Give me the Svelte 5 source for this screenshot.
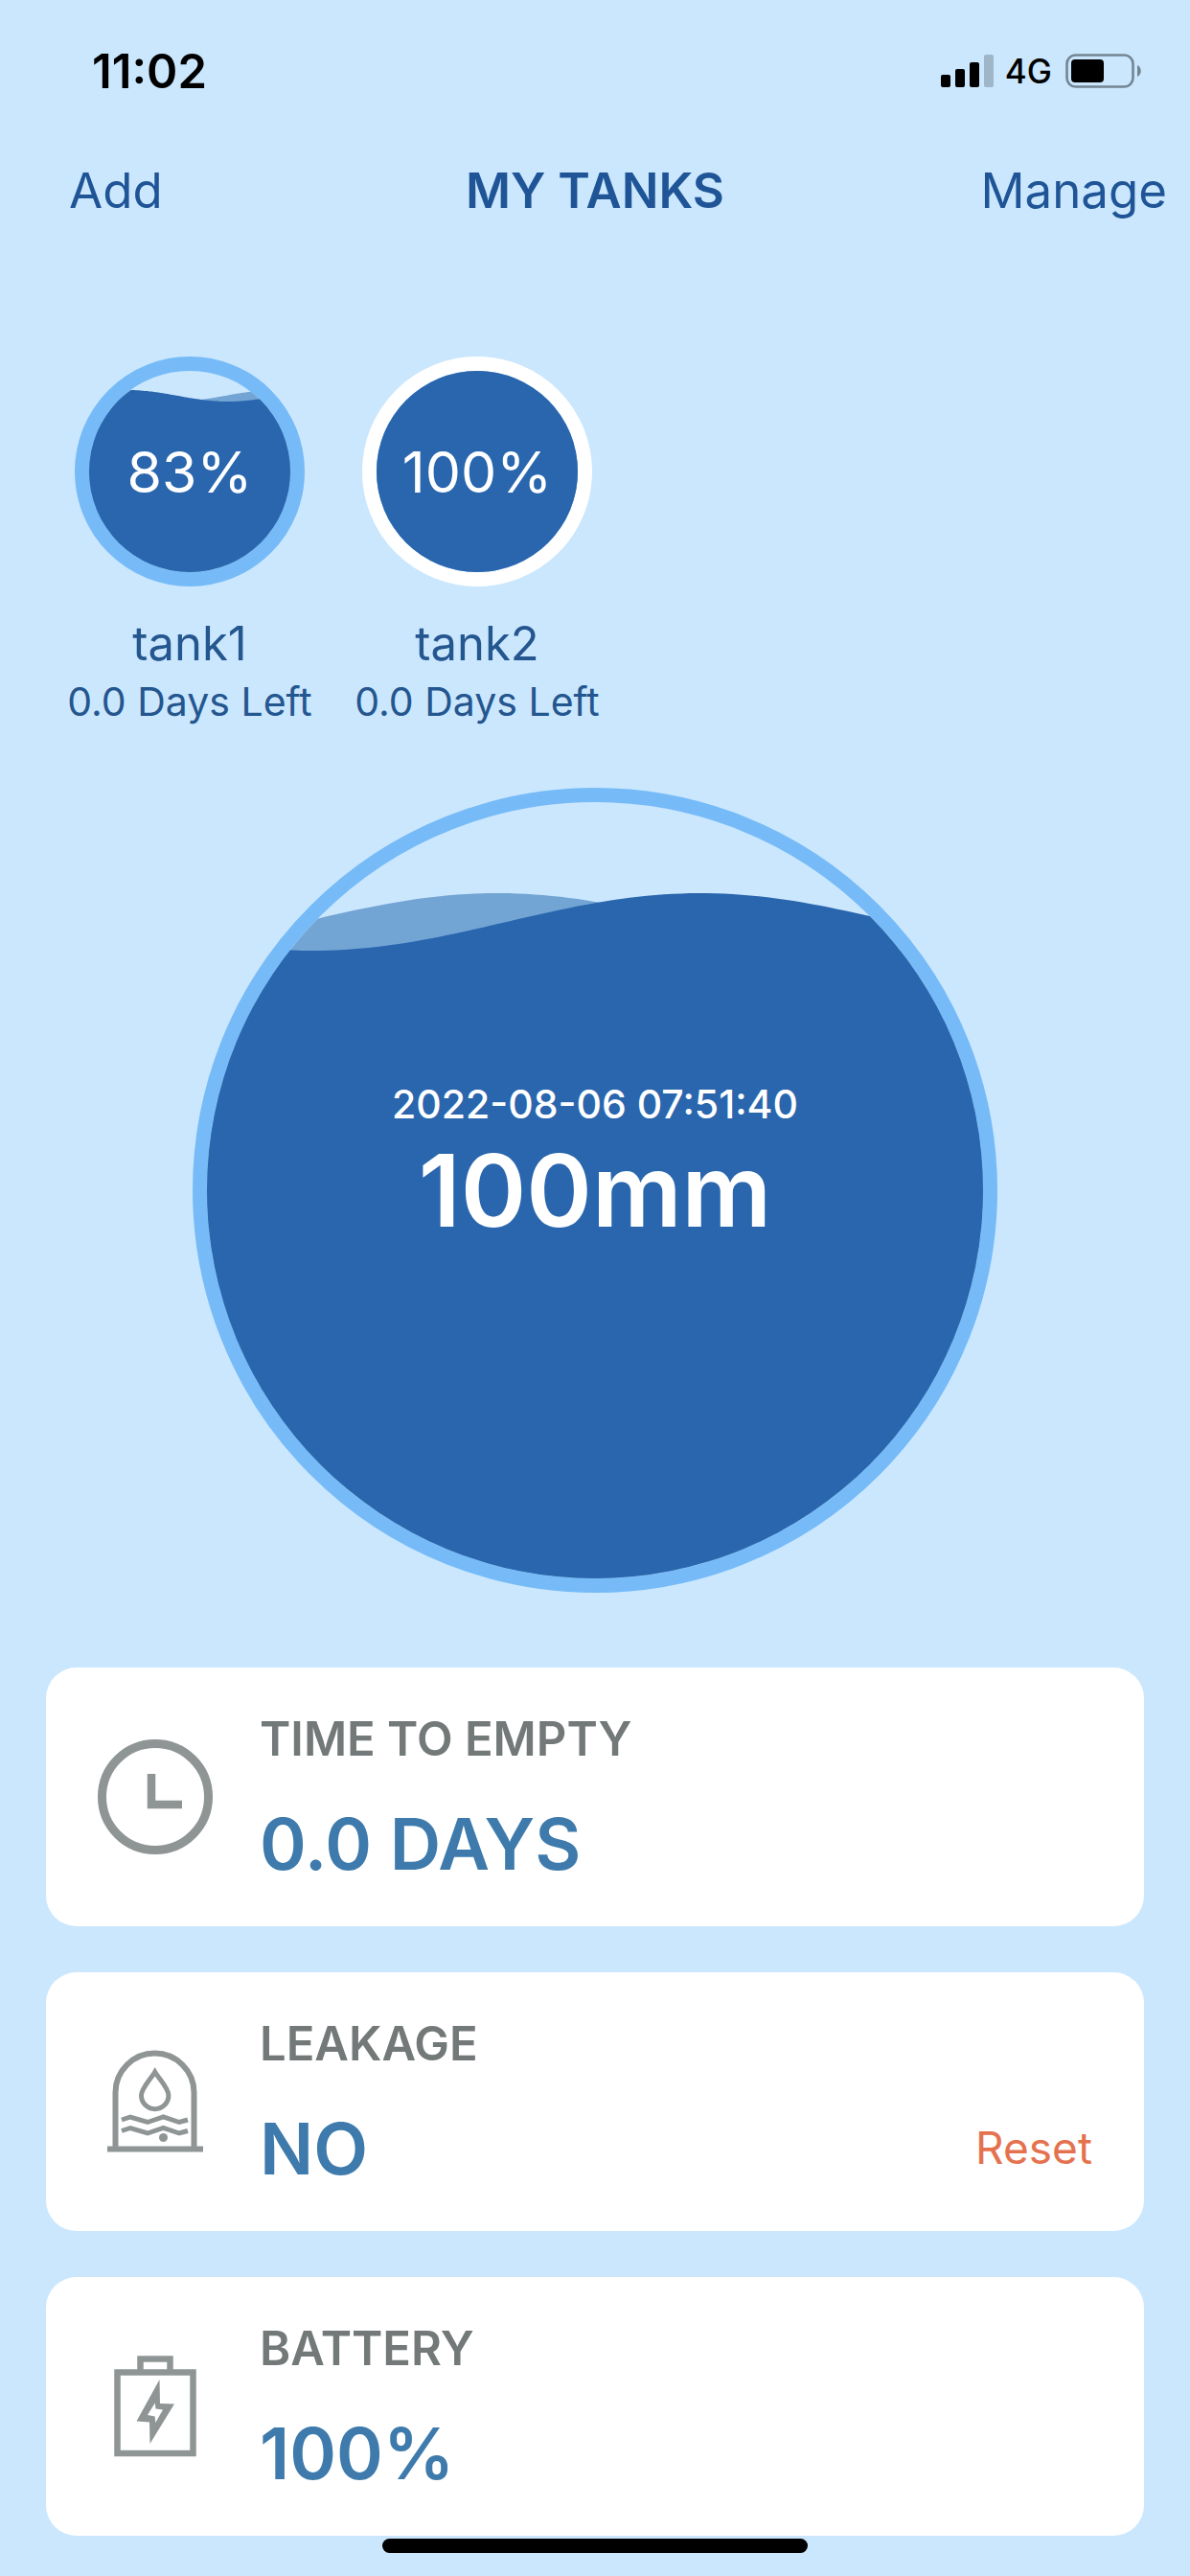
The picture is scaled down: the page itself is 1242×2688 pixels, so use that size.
<script lang="ts">
  type Gauge = { size: number; level: number; amp: number; front: number; back: number };

  const tanks = [
    { name: 'tank1', percent: 83, daysLeft: '0.0', selected: false,
      gauge: { size: 210, level: 26, amp: 6, front: 40, back: 194 } },
    { name: 'tank2', percent: 100, daysLeft: '0.0', selected: true,
      gauge: { size: 210, level: -10, amp: 0, front: 0, back: 0 } },
  ];

  const mainGauge: Gauge = { size: 810, level: 125, amp: 30, front: 515, back: 303 };

  // Closed path under a cosine wave whose crest sits at x = crest.
  function wave(g: Gauge, crest: number): string {
    const step = g.size / 90;
    let d = `M0 ${g.size}`;
    for (let i = 0; i <= 90; i++) {
      const x = i * step;
      const y = g.level - g.amp * Math.cos((2 * Math.PI * (x - crest)) / g.size);
      d += `L${x.toFixed(1)} ${y.toFixed(1)}`;
    }
    return d + `L${g.size} ${g.size}Z`;
  }
</script>

{#snippet water(g: Gauge)}
  <svg class="water" viewBox="0 0 {g.size} {g.size}" aria-hidden="true">
    <path class="wave-back" d={wave(g, g.back)} />
    <path class="wave-front" d={wave(g, g.front)} />
  </svg>
{/snippet}

<div class="app">
  <div class="status">
    <time class="clock">11:02</time>
    <div class="indicators">
      <svg class="signal" viewBox="0 0 55 34" aria-hidden="true">
        <rect x="0" y="21" width="10" height="13" rx="2" />
        <rect x="15" y="15" width="10" height="19" rx="2" />
        <rect x="30" y="8" width="10" height="26" rx="2" />
        <rect x="45" y="0" width="10" height="34" rx="2" fill="#9fb5c8" />
      </svg>
      <span class="network">4G</span>
      <svg class="power" viewBox="0 0 80 36" aria-hidden="true">
        <rect x="1.5" y="1.5" width="69" height="33" rx="9" fill="none" stroke="#738592" stroke-width="2.6" />
        <rect x="6" y="6" width="34" height="24" rx="4" />
        <path d="M75 12c5 2 5 10 0 12z" fill="#738592" />
      </svg>
    </div>
  </div>

  <header class="nav">
    <button class="nav-action start">Add</button>
    <h1>MY TANKS</h1>
    <button class="nav-action end">Manage</button>
  </header>

  <main>
    <div class="tanks">
      {#each tanks as tank}
        <button class="tank">
          <span class="ring" class:selected={tank.selected}>
            {@render water(tank.gauge)}
            <span class="percent">{tank.percent}%</span>
          </span>
          <span class="name">{tank.name}</span>
          <span class="days">{tank.daysLeft} Days Left</span>
        </button>
      {/each}
    </div>

    <section class="ring main-ring" aria-label="Water level">
      {@render water(mainGauge)}
      <div class="reading">
        <time>2022-08-06 07:51:40</time>
        <strong>100mm</strong>
      </div>
    </section>

    <div class="cards">
      <section class="card">
        <svg class="icon" viewBox="0 0 120 120" aria-hidden="true">
          <circle cx="60" cy="60" r="55.5" stroke-width="9" />
          <path d="M56 36V68H88" stroke-width="8.5" />
        </svg>
        <div class="info">
          <h2>TIME TO EMPTY</h2>
          <p>0.0 DAYS</p>
        </div>
      </section>

      <section class="card">
        <svg class="icon" viewBox="0 0 120 120" aria-hidden="true">
          <path d="M10 109.5H110" stroke-width="6" />
          <path d="M18.5 109V50.5a41 41 0 0 1 82 0V109" stroke-width="6" />
          <path d="M59.700 29C55 37 45.500 46 45.500 53.500a14.200 14.200 0 0 0 28.400 0C73.900 46 64.500 37 59.700 29Z" stroke-width="5" />
          <path d="M25 79L34 76L52 81.500L68.500 76L85 81.500L94 79M25 90.500L34 87.500L52 93L68.500 87.500L85 93L94 90.500" stroke-width="5" />
          <circle class="solid" cx="68.500" cy="97.500" r="4.500" />
        </svg>
        <div class="info">
          <h2>LEAKAGE</h2>
          <p>NO</p>
        </div>
        <button class="reset">Reset</button>
      </section>

      <section class="card">
        <svg class="icon" viewBox="0 0 120 120" aria-hidden="true">
          <rect x="20.500" y="24.500" width="79" height="84.500" stroke-width="6.5" />
          <path d="M44.500 24V10.500H75.500V24" stroke-width="6.5" />
          <path class="solid" fill-rule="evenodd" d="M64.500 32L65 57L80 57.500L54.500 99L54 76.500L40.500 75.500ZM59.700 56.500L52 69L59.700 70.500L60.300 77L68 63.500L60.500 62.500Z" />
        </svg>
        <div class="info">
          <h2>BATTERY</h2>
          <p>100%</p>
        </div>
      </section>
    </div>
  </main>

  <div class="home-bar"></div>
</div>

<style>
  :global(body) {
    background: #cbe7fd;
  }

  .app {
    position: relative;
    box-sizing: border-box;
    min-height: 100vh;
    padding-bottom: 42px;
    background: #cbe7fd;
    color: #24568f;
    font-family: Inter, "Liberation Sans", sans-serif;
  }

  button {
    border: 0;
    padding: 0;
    background: none;
    color: inherit;
    font: inherit;
    cursor: pointer;
  }

  h1, h2, p {
    margin: 0;
  }

  .status {
    display: flex;
    align-items: center;
    justify-content: space-between;
    box-sizing: border-box;
    height: 132px;
    padding: 16px 50px 0 96px;
    color: #000;
  }

  .clock {
    font-size: 49px;
    font-weight: 600;
  }

  .indicators {
    display: flex;
    align-items: center;
  }

  .signal {
    width: 55px;
    height: 34px;
    margin-right: 12px;
  }

  .network {
    margin-right: 14px;
    font-size: 35px;
    font-weight: 500;
  }

  .power {
    width: 80px;
    height: 36px;
  }

  .nav {
    display: grid;
    grid-template-columns: 1fr auto 1fr;
    align-items: center;
    height: 132px;
    padding: 0 24px;
    font-size: 51px;
    color: #1f5597;
  }

  .nav-action.start {
    justify-self: start;
    margin-left: 48px;
  }

  .nav-action.end {
    justify-self: end;
  }

  h1 {
    font-size: 51px;
    font-weight: 600;
  }

  .tanks {
    display: flex;
    gap: 48px;
    padding: 108px 72px 0;
  }

  .tank {
    display: flex;
    flex-direction: column;
    align-items: center;
    width: 252px;
    white-space: nowrap;
  }

  .ring {
    position: relative;
    display: grid;
    place-items: center;
    box-sizing: border-box;
    width: 240px;
    aspect-ratio: 1;
    overflow: hidden;
    border: 15px solid #76bbf8;
    border-radius: 50%;
    color: #fff;
  }

  .ring.selected {
    border-color: #fff;
  }

  .water {
    grid-area: 1 / 1;
    width: 100%;
    height: 100%;
  }

  .wave-back {
    fill: #73a5d4;
  }

  .wave-front {
    fill: #2966ae;
  }

  .percent {
    grid-area: 1 / 1;
    font-size: 59px;
  }

  .name {
    margin-top: 28px;
    font-size: 49px;
    line-height: 64px;
  }

  .days {
    font-size: 41px;
    line-height: 56px;
  }

  .main-ring {
    width: 840px;
    max-width: 100%;
    margin: 62px auto 0;
  }

  .reading {
    grid-area: 1 / 1;
    display: flex;
    flex-direction: column;
    align-items: center;
    padding-bottom: 50px;
  }

  .reading time {
    font-size: 41px;
    font-weight: 500;
    line-height: 50px;
  }

  .reading strong {
    font-size: 104px;
    font-weight: 600;
    line-height: 130px;
  }

  .cards {
    display: grid;
    gap: 48px;
    padding: 78px 48px 0;
  }

  .card {
    display: flex;
    align-items: center;
    gap: 49px;
    min-height: 270px;
    box-sizing: border-box;
    padding: 0 54px;
    border-radius: 32px;
    background: #fff;
  }

  .icon {
    flex: none;
    width: 120px;
    height: 120px;
    fill: none;
    stroke: #8f9595;
  }

  .icon .solid {
    fill: #8f9595;
    stroke: none;
  }

  .info {
    flex: 1;
    padding-top: 2px;
  }

  h2 {
    color: #737879;
    font-size: 49px;
    font-weight: 600;
    line-height: 64px;
  }

  .info p {
    margin-top: 32px;
    color: #3e7bac;
    font-size: 74px;
    font-weight: 600;
    line-height: 90px;
  }

  .reset {
    align-self: flex-end;
    margin-bottom: 57px;
    color: #e5724f;
    font-size: 46px;
    line-height: 60px;
  }

  .home-bar {
    position: absolute;
    left: 50%;
    bottom: 24px;
    width: 444px;
    height: 15px;
    margin-left: -222px;
    border-radius: 8px;
    background: #000;
  }
</style>
